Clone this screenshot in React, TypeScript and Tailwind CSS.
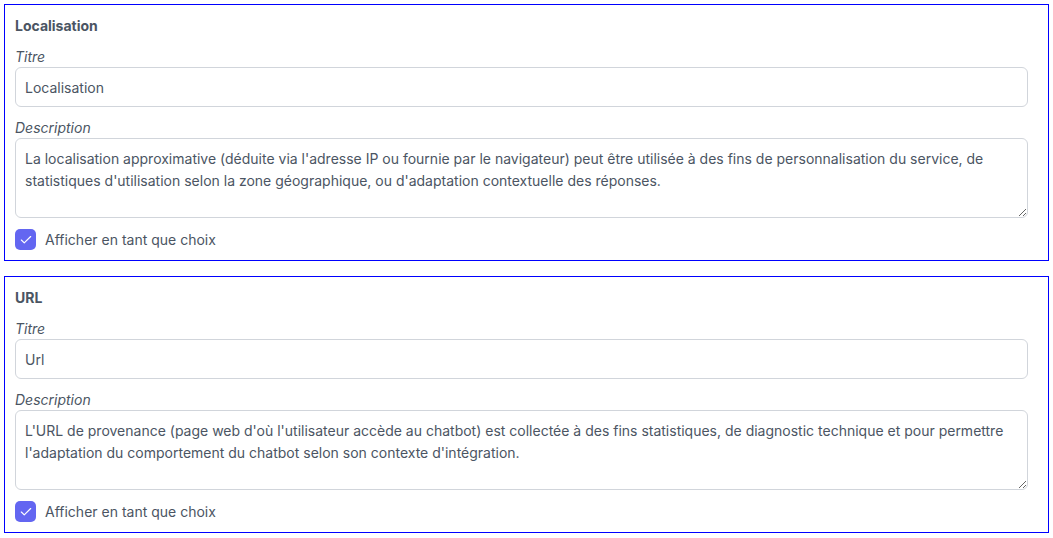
import { Check } from 'lucide-react';

type Item = {
  heading: string;
  title: string;
  description: string;
};

const items: Item[] = [
  {
    heading: 'Localisation',
    title: 'Localisation',
    description:
      "La localisation approximative (déduite via l'adresse IP ou fournie par le navigateur) peut être utilisée à des fins de personnalisation du service, de statistiques d'utilisation selon la zone géographique, ou d'adaptation contextuelle des réponses.",
  },
  {
    heading: 'URL',
    title: 'Url',
    description:
      "L'URL de provenance (page web d'où l'utilisateur accède au chatbot) est collectée à des fins statistiques, de diagnostic technique et pour permettre l'adaptation du comportement du chatbot selon son contexte d'intégration.",
  },
];

function ConsentCard({ item }: { item: Item }) {
  return (
    <div className="border border-[#0000ff] pl-[10px] pr-[20px] pt-[11px] pb-[10px]">
      <div className="text-[14px] font-bold leading-5 text-[#4b5563]">{item.heading}</div>
      <label className="mt-[11px] block text-[14px] italic leading-5 text-[#4b5563]">Titre</label>
      <input
        readOnly
        value={item.title}
        className="mt-0 block h-10 w-full rounded-md border border-[#d1d5db] bg-white px-[9px] text-[14px] text-[#4b5563] outline-none"
      />
      <label className="mt-[11px] block text-[14px] italic leading-5 text-[#4b5563]">
        Description
      </label>
      <textarea
        readOnly
        value={item.description}
        className="mt-0 block h-20 w-full rounded-md border border-[#d1d5db] bg-white px-[9px] py-[9px] text-[14px] leading-[22px] text-[#4b5563] outline-none"
      />
      <div className="mt-[11px] flex items-center gap-[9px]">
        <div className="flex h-[21px] w-[21px] items-center justify-center rounded-[5px] bg-[#6366f1]">
          <Check className="h-[14px] w-[14px] text-white" strokeWidth={2} />
        </div>
        <span className="text-[14px] leading-5 text-[#4b5563]">Afficher en tant que choix</span>
      </div>
    </div>
  );
}

export default function App() {
  return (
    <div
      className="flex flex-col gap-[15px] bg-white p-[4px]"
      style={{ fontFamily: 'Inter, "Noto Sans", sans-serif' }}
    >
      {items.map((item) => (
        <ConsentCard key={item.heading} item={item} />
      ))}
    </div>
  );
}
